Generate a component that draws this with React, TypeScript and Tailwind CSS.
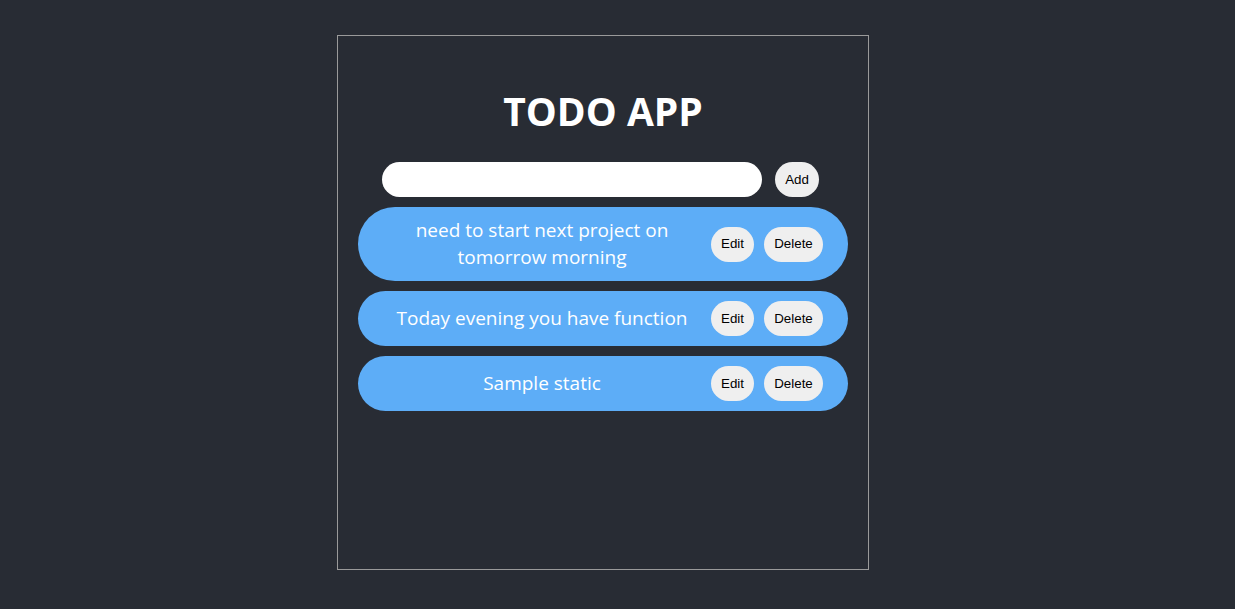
const todos = [
  "need to start next project on tomorrow morning",
  "Today evening you have function",
  "Sample static",
];

export default function App() {
  return (
    <div className="min-h-[609px] bg-[#282c34] pt-[35px] pl-[337px]">
      <div className="w-[532px] h-[535px] border border-[#9a9a9a] font-['Open_Sans',sans-serif]">
        <h1 className="mt-[49px] text-center text-[39px] leading-[52px] font-bold text-white">
          TODO APP
        </h1>
        <div className="mt-[25px] flex items-center pl-[44px]">
          <input
            type="text"
            className="w-[380px] h-[35px] rounded-full bg-white px-4 text-black outline-none"
          />
          <button className="ml-[13px] h-[35px] w-[44px] rounded-full bg-[#efefef] text-[13.33px] text-black font-['Liberation_Sans',Arial,sans-serif]">
            Add
          </button>
        </div>
        <ul className="mt-[10px] mx-5 flex flex-col gap-[10px]">
          {todos.map((t) => (
            <li
              key={t}
              className="flex items-center rounded-[37px] bg-[#5dadf7] py-[10px] pl-5 pr-[25px]"
            >
              <p className="w-[328px] text-center text-[19px] leading-[27px] text-white">
                {t}
              </p>
              <div className="ml-[5px] flex gap-[10px] font-['Liberation_Sans',Arial,sans-serif] text-[13.33px] text-black">
                <button className="h-[35px] w-[43px] rounded-full bg-[#efefef]">Edit</button>
                <button className="h-[35px] w-[59px] rounded-full bg-[#efefef]">Delete</button>
              </div>
            </li>
          ))}
        </ul>
      </div>
    </div>
  );
}
